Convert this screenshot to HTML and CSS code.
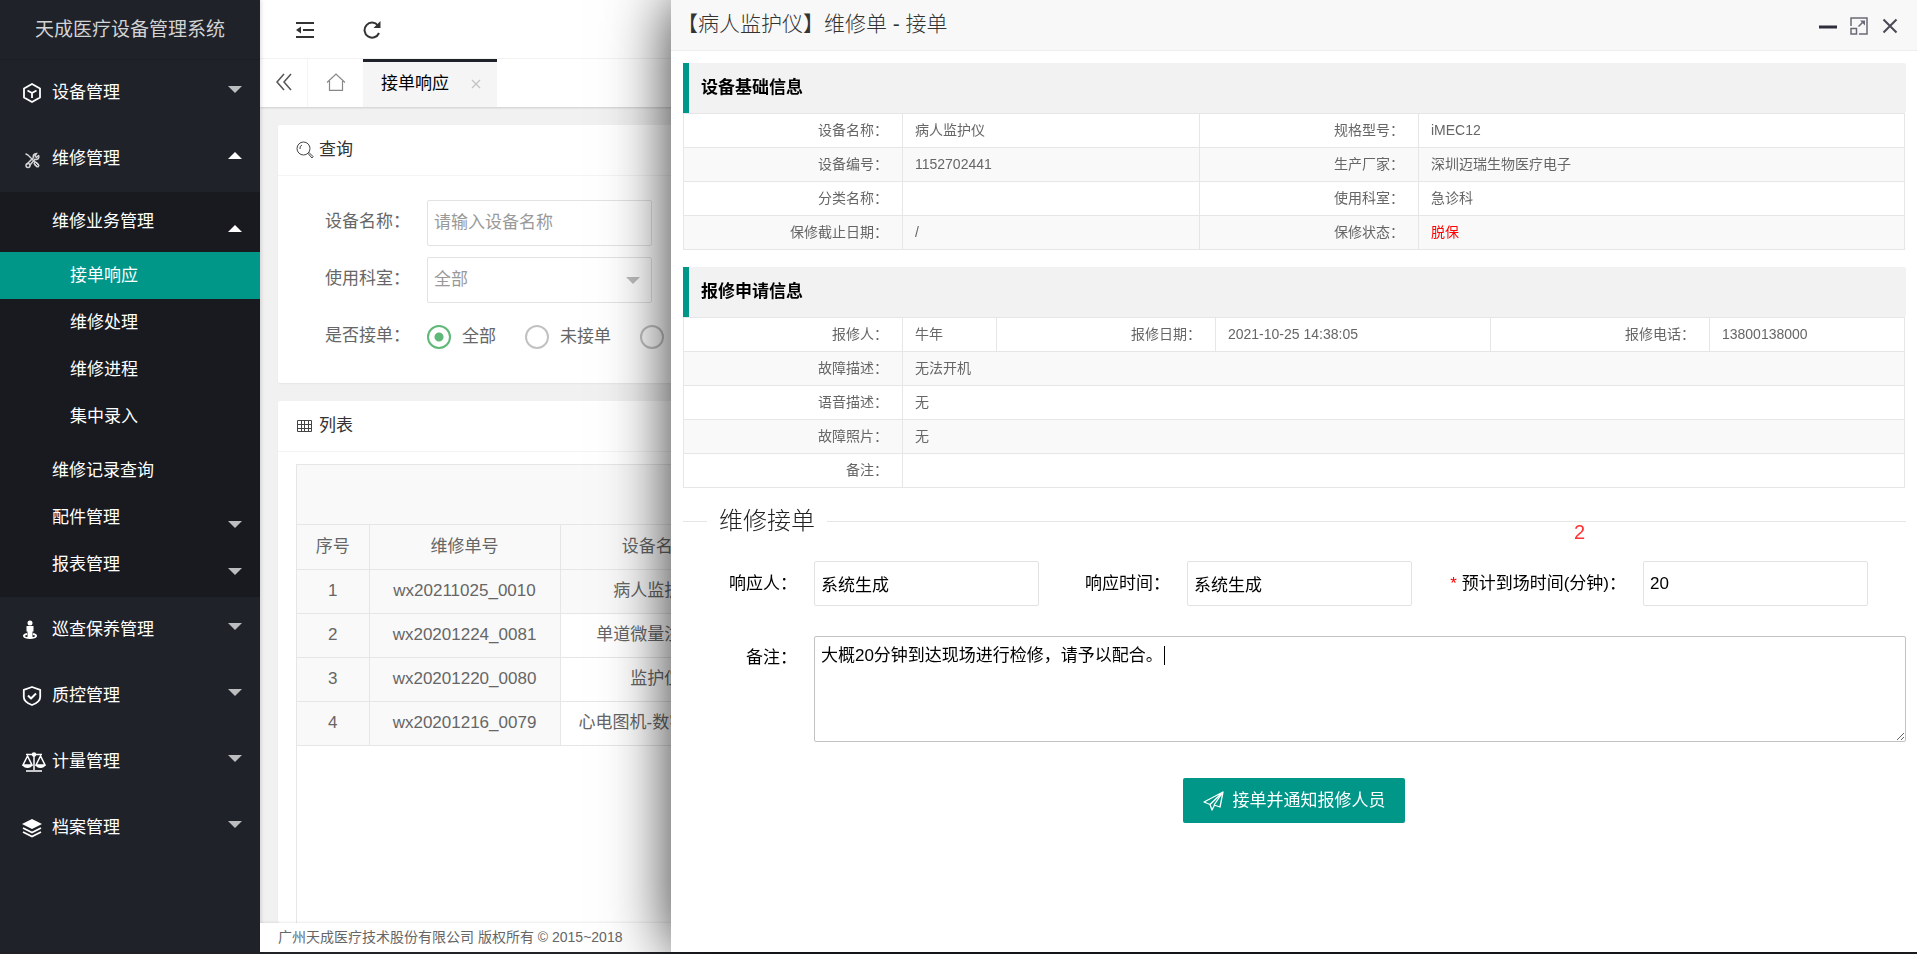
FILE: index.html
```
<!DOCTYPE html>
<html lang="zh-CN">
<head>
    <meta charset="utf-8">
    <title>天成医疗设备管理系统</title>
    <meta name="viewport" content="width=device-width, initial-scale=1.0">
    <link rel="stylesheet" href="styles.css">
</head>
<body>
    <div class="app">
        <aside class="side">
            <div class="logo">天成医疗设备管理系统</div>
            <nav>
                <a class="nav-item" href="#">
                    <svg class="nav-icon" viewBox="0 0 20 20" fill="none" stroke="currentColor" stroke-width="1.800" stroke-linejoin="round"><path d="M10 1l8 4.500v9L10 19l-8-4.500v-9zM5.500 7.500L10 10l4.500-2.500M10 10v5"/></svg>
                    <span>设备管理</span><i class="caret"></i>
                </a>
                <a class="nav-item" href="#">
                    <svg class="nav-icon" viewBox="0 0 20 20" fill="none" stroke="#d2d3d4" stroke-linecap="round"><path d="M4 5l2 1 8 8" stroke-width="1.500"/><path d="M13.500 14.500l2 2" stroke-width="4"/><path d="M13.500 14.500l2 2" stroke="#20222a" stroke-width="1"/><path d="M16.500 6.500l-2 2-1.500-1.500 1.500-2.500c-2.500 0-4 2-3 4L5 15" stroke-width="1.500"/><path d="M16.800 7c.5 2.500-1.500 4-3.800 3.200L8 16" stroke-width="1.500"/><circle cx="6" cy="16.500" r="2" stroke-width="1.500"/></svg>
                    <span>维修管理</span><i class="caret up"></i>
                </a>
                <div class="sub">
                    <a class="sub-item" href="#"><span>维修业务管理</span><i class="caret up"></i></a>
                    <div class="leaf">
                        <a class="leaf-item active" href="#">接单响应</a>
                        <a class="leaf-item" href="#">维修处理</a>
                        <a class="leaf-item" href="#">维修进程</a>
                        <a class="leaf-item" href="#">集中录入</a>
                    </div>
                    <a class="sub-item" href="#"><span>维修记录查询</span></a>
                    <a class="sub-item" href="#"><span>配件管理</span><i class="caret"></i></a>
                    <a class="sub-item" href="#"><span>报表管理</span><i class="caret"></i></a>
                </div>
                <a class="nav-item" href="#">
                    <svg class="nav-icon" viewBox="0 0 20 20" fill="currentColor"><circle cx="8" cy="3" r="2.500"/><path d="M4.500 6h7v5.500H10.500V17h-5v-5.500h-1z"/><path d="M5 14c-5 1-4 4 3 4s8-3 3-4" fill="none" stroke="currentColor" stroke-width="1.800"/></svg>
                    <span>巡查保养管理</span><i class="caret"></i>
                </a>
                <a class="nav-item" href="#">
                    <svg class="nav-icon" viewBox="0 0 20 20" fill="none" stroke="currentColor" stroke-width="1.800" stroke-linejoin="round"><path d="M10 1l8.200 2.800V11c0 4-4.200 6.500-8.200 8-4-1.500-8.200-4-8.200-8V3.800z"/><path d="M6 9.500l3 3 5-5" stroke-width="2"/></svg>
                    <span>质控管理</span><i class="caret"></i>
                </a>
                <a class="nav-item" href="#">
                    <svg class="nav-icon wide" viewBox="0 0 24 20" fill="none" stroke="currentColor" stroke-width="1.500"><path d="M4 2.500h16M12 1v17M4 19h16"/><circle cx="12" cy="2.500" r="1.500"/><path d="M5.500 4L1 13h9zM18.500 4L14 13h9z"/><path d="M.5 13c1 4 9 4 10 0zM13.500 13c1 4 9 4 10 0z" fill="currentColor" stroke="none"/></svg>
                    <span>计量管理</span><i class="caret"></i>
                </a>
                <a class="nav-item" href="#">
                    <svg class="nav-icon" viewBox="0 0 20 20" fill="currentColor"><path d="M10 1l10 5-10 5L0 6z"/><path d="M1 10l9 4.500 9-4.500M1 14l9 4.500 9-4.500" fill="none" stroke="currentColor" stroke-width="1.800"/></svg>
                    <span>档案管理</span><i class="caret"></i>
                </a>
            </nav>
        </aside>

        <div class="main">
            <header class="top">
                <button class="icon-btn" type="button" aria-label="收起菜单">
                    <svg width="18" height="18" viewBox="0 0 18 18" fill="none" stroke="#333" stroke-width="2"><path d="M0 2h18M7 9h11M0 16h18"/><path d="M5 5.500v7L0 9z" fill="#333" stroke="none"/></svg>
                </button>
                <button class="icon-btn" type="button" aria-label="刷新">
                    <svg width="18" height="18" viewBox="0 0 18 18" fill="none" stroke="#333" stroke-width="2"><path d="M15 4.500A7.500 7.500 0 1 0 16 12"/><path d="M17.500 0v7h-7z" fill="#333" stroke="none"/></svg>
                </button>
            </header>

            <div class="tabs">
                <button class="tab-prev" type="button" aria-label="向左">
                    <svg width="18" height="18" viewBox="0 0 18 18" fill="none" stroke="#555" stroke-width="1.500"><path d="M9 1L2 9l7 8M16 1L9 9l7 8"/></svg>
                </button>
                <a class="tab-home" href="#" aria-label="首页">
                    <svg width="20" height="18" viewBox="0 0 20 18" fill="none" stroke="#888" stroke-width="1.200"><path d="M1 9.500L10 1l9 8.500M3.500 8v9.400h13V8"/></svg>
                </a>
                <a class="tab" href="#">接单响应
                    <svg width="10" height="10" viewBox="0 0 10 10" stroke="#c2c2c2" stroke-width="1.200"><path d="M1 1l8 8M9 1L1 9"/></svg>
                </a>
            </div>

            <div class="content">
                <section class="card">
                    <h2 class="card-title">
                        <svg width="18" height="18" viewBox="0 0 18 18" fill="none" stroke="#444"><circle cx="7.500" cy="7.500" r="6.500"/><path d="M4 8a3.500 3.500 0 0 1 2-4M12 12.500l1-1 4 4-1 1.500z"/></svg>
                        查询
                    </h2>
                    <form class="search">
                        <div class="search-row">
                            <label for="devName">设备名称：</label>
                            <input class="field" id="devName" type="text" placeholder="请输入设备名称">
                        </div>
                        <div class="search-row">
                            <label for="dept">使用科室：</label>
                            <div class="select">
                                <select class="field" id="dept"><option>全部</option></select>
                                <i class="caret"></i>
                            </div>
                        </div>
                        <div class="search-row" role="radiogroup" aria-labelledby="takenLabel">
                            <span class="row-label" id="takenLabel">是否接单：</span>
                            <label class="radio"><input type="radio" name="taken" checked>全部</label>
                            <label class="radio"><input type="radio" name="taken">未接单</label>
                            <label class="radio"><input type="radio" name="taken">已接单</label>
                        </div>
                    </form>
                </section>

                <section class="card list-card">
                    <h2 class="card-title">
                        <svg width="18" height="18" viewBox="0 0 18 18" fill="none" stroke="#444"><path d="M1.500 3.500h14v11h-14zM1.500 7.500h14M1.500 11.500h14M5.500 3.500v11M8.500 3.500v11M12.500 3.500v11"/></svg>
                        列表
                    </h2>
                    <div class="list-box">
                        <div class="list-tools"></div>
                        <table class="list">
                            <colgroup><col class="c-no"><col class="c-order"><col class="c-name"></colgroup>
                            <thead>
                                <tr><th>序号</th><th>维修单号</th><th>设备名称</th></tr>
                            </thead>
                            <tbody>
                                <tr class="hover"><td>1</td><td>wx20211025_0010</td><td>病人监护仪</td></tr>
                                <tr><td>2</td><td>wx20201224_0081</td><td>单道微量注射泵</td></tr>
                                <tr><td>3</td><td>wx20201220_0080</td><td>监护仪</td></tr>
                                <tr><td>4</td><td>wx20201216_0079</td><td>心电图机-数字心电图</td></tr>
                            </tbody>
                        </table>
                    </div>
                </section>
            </div>

            <footer class="foot">广州天成医疗技术股份有限公司 版权所有 © 2015~2018</footer>
        </div>
    </div>

    <div class="layer" role="dialog" aria-labelledby="layerTitle">
        <div class="layer-head">
            <h1 id="layerTitle">【病人监护仪】维修单 - 接单</h1>
            <div class="layer-btns">
                <button type="button" aria-label="最小化"><svg width="18" height="18" viewBox="0 0 18 18"><path d="M0 8.500h18v3H0z" fill="#2e2d3c"/></svg></button>
                <button type="button" aria-label="最大化"><svg width="18" height="18" viewBox="0 0 18 18" fill="none" stroke="#6a6a76" stroke-width="1.500"><path d="M1 9V1h16v16H9M1 11.500h5.500V17H1zM8.500 9.500l5-5"/><path d="M10 3.500h5v5z" fill="#6a6a76" stroke="none"/></svg></button>
                <button type="button" aria-label="关闭"><svg width="18" height="18" viewBox="0 0 18 18" stroke="#4a4955" stroke-width="2"><path d="M2.500 2.500l13 13M15.500 2.500l-13 13"/></svg></button>
            </div>
        </div>

        <div class="layer-body">
            <h2 class="quote">设备基础信息</h2>
            <table class="info">
                <colgroup><col class="c-key"><col class="c-base"><col class="c-key"><col></colgroup>
                <tr><th>设备名称：</th><td>病人监护仪</td><th>规格型号：</th><td>iMEC12</td></tr>
                <tr><th>设备编号：</th><td>1152702441</td><th>生产厂家：</th><td>深圳迈瑞生物医疗电子</td></tr>
                <tr><th>分类名称：</th><td></td><th>使用科室：</th><td>急诊科</td></tr>
                <tr><th>保修截止日期：</th><td>/</td><th>保修状态：</th><td class="expired">脱保</td></tr>
            </table>

            <h2 class="quote">报修申请信息</h2>
            <table class="info">
                <colgroup><col class="c-key"><col class="c-person"><col class="c-key"><col class="c-date"><col class="c-key"><col></colgroup>
                <tr><th>报修人：</th><td>牛年</td><th>报修日期：</th><td>2021-10-25 14:38:05</td><th>报修电话：</th><td>13800138000</td></tr>
                <tr><th>故障描述：</th><td colspan="5">无法开机</td></tr>
                <tr><th>语音描述：</th><td colspan="5">无</td></tr>
                <tr><th>故障照片：</th><td colspan="5">无</td></tr>
                <tr><th>备注：</th><td colspan="5"></td></tr>
            </table>

            <form class="take">
                <h2 class="legend">维修接单</h2>
                <span class="mark">2</span>
                <div class="take-row">
                    <label for="person">响应人：</label>
                    <input class="field" id="person" type="text" value="系统生成">
                    <label for="time">响应时间：</label>
                    <input class="field" id="time" type="text" value="系统生成">
                    <label class="long" for="minutes"><span class="must">*</span> 预计到场时间(分钟)：</label>
                    <input class="field" id="minutes" type="text" value="20">
                </div>
                <div class="take-row note-row">
                    <label for="note">备注：</label>
                    <div class="note">
                        <textarea class="field" id="note">大概20分钟到达现场进行检修，请予以配合。</textarea>
                        <i class="cursor"></i>
                    </div>
                </div>
                <button class="submit" type="button">
                    <svg width="21" height="20" viewBox="0 0 21 20" fill="none" stroke="#fff" stroke-width="1.300" stroke-linejoin="round"><path d="M20 1L1 11l6 2.500L20 1l-3 15-6-2M7 13.500L9 19l2.500-5M20 1l-9 13"/></svg>
                    接单并通知报修人员
                </button>
            </form>
        </div>
    </div>
</body>
</html>
```
FILE: styles.css
```
* {
    box-sizing: border-box;
}

body {
    margin: 0;
    padding-bottom: 2px;
    background-color: #222327;
    color: #666;
    font-family: "Liberation Sans", "Noto Sans CJK SC", sans-serif;
    font-size: 17px;
    line-height: 24px;
    overflow: hidden;
}

h1, h2 {
    margin: 0;
    font-weight: normal;
}

a {
    color: inherit;
    text-decoration: none;
}

button {
    padding: 0;
    border: none;
    background: none;
    font: inherit;
    cursor: pointer;
}

svg {
    display: block;
    flex: none;
}

.app {
    display: flex;
    height: calc(100vh - 2px);
}

.caret {
    flex: none;
    border: 7px solid transparent;
    border-top-color: #bcbdbe;
    border-bottom-width: 0;
}

.caret.up {
    border-top-width: 0;
    border-bottom: 7px solid #fff;
}

/* Left menu */
.side {
    flex: none;
    width: 260px;
    background-color: #20222a;
    color: #fff;
    z-index: 1;
    box-shadow: 1px 0 4px rgba(0, 0, 0, 0.15);
}

.logo {
    height: 60px;
    line-height: 60px;
    font-size: 19px;
    text-align: center;
    color: #d2d3d4;
    border-bottom: 1px solid #1c1e25;
}

.nav-item {
    display: flex;
    align-items: center;
    height: 66px;
    padding: 0 18px 0 22px;
}

.nav-icon {
    width: 20px;
    height: 20px;
    margin-right: 10px;
}

.nav-icon.wide {
    width: 24px;
    margin-right: 6px;
}

.nav-item .caret,
.sub-item .caret {
    margin-left: auto;
}

.nav-item .caret {
    margin-bottom: 7px;
}

.sub {
    padding: 6px 0 9px;
    background-color: #181a1f;
}

.sub-item {
    display: flex;
    align-items: center;
    height: 47px;
    padding: 0 18px 0 52px;
}

.sub-item .caret {
    margin-top: 14px;
}

.leaf {
    padding: 7px 0;
}

.leaf-item {
    display: block;
    padding-left: 70px;
    line-height: 47px;
}

.leaf-item.active {
    background-color: #009688;
}

/* Page behind the layer */
.main {
    display: flex;
    flex: 1;
    flex-direction: column;
    min-width: 0;
    background-color: #f1f1f1;
}

.top {
    display: flex;
    gap: 49px;
    align-items: center;
    flex: none;
    height: 59px;
    padding: 2px 0 0 36px;
    background-color: #fff;
    border-bottom: 1px solid #f4f4f4;
}

.tabs {
    display: flex;
    flex: none;
    height: 48px;
    background-color: #fff;
    box-shadow: 0 1px 2px rgba(0, 0, 0, 0.15);
}

.tab-prev {
    display: flex;
    align-items: center;
    justify-content: center;
    width: 48px;
    padding-bottom: 2px;
    border-right: 1px solid #f4f4f4;
}

.tab-home {
    display: flex;
    align-items: center;
    justify-content: center;
    width: 55px;
    padding-bottom: 2px;
}

.tab {
    display: flex;
    align-items: center;
    gap: 22px;
    padding: 0 16px 2px 18px;
    background-color: #f5f5f5;
    border-top: 3px solid #20222a;
    color: #000;
}

.content {
    display: flex;
    flex: 1;
    flex-direction: column;
    gap: 18px;
    min-height: 0;
    padding: 18px 18px 0;
    overflow: hidden;
}

.card {
    flex: none;
    background-color: #fff;
    border-radius: 2px;
    box-shadow: 0 1px 2px rgba(0, 0, 0, 0.05);
}

.card-title {
    display: flex;
    align-items: center;
    gap: 5px;
    height: 51px;
    padding-left: 18px;
    font-size: 17px;
    color: #333;
    border-bottom: 1px solid #f4f4f4;
}

.search {
    display: flex;
    flex-direction: column;
    gap: 11px;
    padding: 24px 18px 23px;
}

.search-row {
    display: flex;
    align-items: center;
    height: 46px;
}

.search-row > label:first-child,
.row-label {
    width: 131px;
    padding-right: 17px;
    margin-bottom: 2px;
    text-align: right;
}

.field {
    width: 225px;
    height: 46px;
    padding: 0 6px;
    border: 1px solid #e2e2e2;
    border-radius: 2px;
    background-color: #fff;
    font: inherit;
    color: #000;
    outline: none;
}

.search .field,
.search .field::placeholder {
    color: #999;
}

.select {
    position: relative;
}

.select select {
    appearance: none;
}

.select .caret {
    position: absolute;
    right: 12px;
    top: 20px;
    pointer-events: none;
}

.radio {
    display: flex;
    align-items: center;
    gap: 11px;
    margin-right: 29px;
}

.radio input {
    appearance: none;
    width: 24px;
    height: 24px;
    margin: 0;
    border: 2px solid #c2c2c2;
    border-radius: 50%;
}

.radio input:checked {
    border-color: #5fb878;
    background: radial-gradient(circle, #5fb878 4px, transparent 5px);
}

.list-card {
    display: flex;
    flex: 1;
    flex-direction: column;
}

.list-box {
    flex: 1;
    margin: 12px 18px 0;
    border: 1px solid #e6e6e6;
    border-bottom: none;
}

.list-tools {
    height: 60px;
    background-color: #f9f9f9;
    border-bottom: 1px solid #e6e6e6;
}

.list {
    table-layout: fixed;
    width: 455px;
    border-collapse: collapse;
    text-align: center;
}

.c-no {
    width: 72px;
}

.c-order {
    width: 191px;
}

.list th,
.list td {
    height: 44px;
    padding: 0 18px;
    font-weight: normal;
    white-space: nowrap;
    overflow: hidden;
    border-right: 1px solid #e6e6e6;
    border-bottom: 1px solid #e6e6e6;
}

.list td:nth-child(2) {
    padding: 0;
}

.list th,
.list .hover td,
.list td:nth-child(-n+2) {
    background-color: #f9f9f9;
}

.foot {
    flex: none;
    padding: 0 18px;
    background-color: #fff;
    font-size: 14px;
    line-height: 29px;
    box-shadow: 0 -1px 2px rgba(0, 0, 0, 0.08);
    z-index: 1;
}

/* Layer sliding in from the right */
.layer {
    position: fixed;
    top: 0;
    right: 0;
    bottom: 2px;
    z-index: 10;
    width: 65%;
    background-color: #fff;
    box-shadow: 0 0 60px rgba(0, 0, 0, 0.8);
}

.layer-head {
    display: flex;
    justify-content: space-between;
    height: 51px;
    padding: 0 18px 0 6px;
    background-color: #f8f8f8;
    border-bottom: 1px solid #eee;
}

.layer-head h1 {
    font-size: 21px;
    font-weight: 300;
    line-height: 48px;
    color: #333;
}

.layer-btns {
    display: flex;
    align-items: center;
    gap: 13px;
    padding-top: 2px;
}

.layer-body {
    padding: 12px 11px 0 12px;
}

.quote {
    height: 50px;
    padding-left: 12px;
    border-left: 6px solid #009688;
    border-radius: 0 2px 2px 0;
    background-color: #f2f2f2;
    font-size: 17px;
    font-weight: bold;
    line-height: 50px;
    color: #000;
}

.info {
    table-layout: fixed;
    width: calc(100% - 1px);
    margin-bottom: 17px;
    border-collapse: collapse;
    font-size: 14px;
    line-height: 20px;
}

.c-key {
    width: 219px;
}

.c-base {
    width: 297px;
}

.c-person {
    width: 94px;
}

.c-date {
    width: 275px;
}

.info tr:nth-child(even) {
    background-color: #f9f9f9;
}

.info th,
.info td {
    height: 34px;
    padding: 0 12px 2px;
    border: 1px solid #e6e6e6;
    font-weight: normal;
    text-align: left;
}

.info th {
    padding-right: 14px;
    text-align: right;
}

.info .expired {
    color: #f00;
}

/* Order form */
.take {
    position: relative;
    color: #000;
}

.legend {
    display: flex;
    align-items: center;
    gap: 12px;
    font-size: 24px;
    font-weight: 300;
    line-height: 32px;
    color: #222;
}

.legend::before,
.legend::after {
    content: "";
    width: 24px;
    height: 1px;
    background-color: #e6e6e6;
}

.legend::after {
    flex: 1;
}

/* Step number over the form */
.mark {
    position: absolute;
    top: 15px;
    right: 321px;
    font-size: 20px;
    color: #f33;
}

.take-row {
    display: flex;
    align-items: center;
    margin-top: 24px;
}

.take-row label {
    flex: none;
    width: 131px;
    padding: 0 17px 0 0;
    text-align: right;
}

.take-row .field {
    height: 45px;
}

.take-row .field + label {
    width: 148px;
}

.take-row .field + .long {
    width: 231px;
}

.must {
    color: #f00;
}

.note-row {
    align-items: flex-start;
    margin-top: 30px;
}

.note-row label {
    padding-top: 10px;
}

.note {
    position: relative;
    flex: 1;
}

.note-row .note .field {
    display: block;
    width: 100%;
    height: 106px;
    padding: 7px 6px;
    border-color: #c2c2c2;
    resize: vertical;
}

.cursor {
    position: absolute;
    left: 350px;
    top: 10px;
    height: 19px;
    border-left: 1px solid #000;
}

.submit {
    display: flex;
    align-items: center;
    gap: 8px;
    height: 45px;
    margin: 36px auto 0;
    padding: 0 20px;
    border-radius: 2px;
    background-color: #009688;
    color: #fff;
}

.submit:hover {
    opacity: 0.8;
}
```
